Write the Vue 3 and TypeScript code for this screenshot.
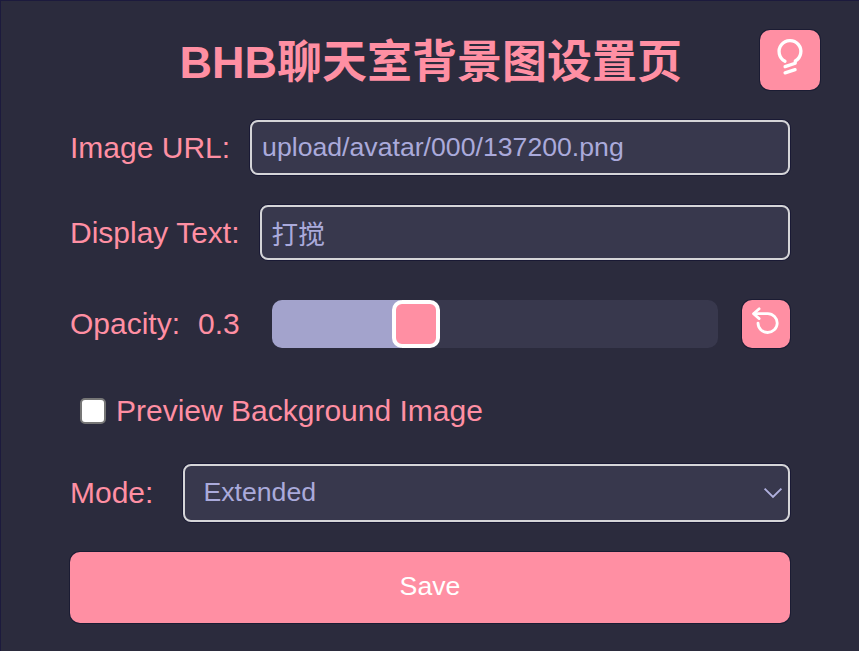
<script setup lang="ts">
import { computed, ref } from 'vue'

const imageUrl = ref<string>('upload/avatar/000/137200.png')
const displayText = ref<string>('打搅')
const opacity = ref<number>(0.3)
const preview = ref<boolean>(false)
const mode = ref<string>('Extended')

const THUMB = 48
const TRACK = 446
const thumbLeft = computed<number>(() => Math.round(opacity.value * (TRACK - THUMB)))

function resetOpacity(): void {
  opacity.value = 0.3
}
</script>

<template>
  <main class="page">
    <header class="head">
      <h1>BHB聊天室背景图设置页</h1>
      <button class="icon-btn theme" type="button">
        <svg width="60" height="60" viewBox="0 0 60 60" fill="none" stroke="#fff" stroke-width="3.3" stroke-linecap="round" stroke-linejoin="round">
          <path d="M25 31.2A10.9 10.9 0 1 1 35.3 31L35.2 33.2L25.1 36.6" />
          <path d="M25.1 42.8L35.1 39.7" />
        </svg>
      </button>
    </header>

    <div class="row field">
      <label for="url">Image URL:</label>
      <input id="url" v-model="imageUrl" type="text" spellcheck="false" />
    </div>

    <div class="row field">
      <label for="text">Display Text:</label>
      <input id="text" v-model="displayText" type="text" spellcheck="false" />
    </div>

    <div class="row opacity">
      <span class="name">Opacity:</span>
      <span class="value">{{ opacity }}</span>
      <div class="track">
        <div class="fill" :style="{ width: thumbLeft + 10 + 'px' }"></div>
        <div class="thumb"></div>
      </div>
      <button class="icon-btn reset" type="button" @click="resetOpacity">
        <svg width="48" height="48" viewBox="0 0 48 48" fill="none" stroke="#fff" stroke-width="2.8" stroke-linecap="round" stroke-linejoin="round">
          <path d="M17.2 8.8L11.5 13.7L17.2 18.6" />
          <path d="M12 13.7H25.8A9.6 9.4 0 1 1 16 23.1" />
        </svg>
      </button>
    </div>

    <label class="row check">
      <input v-model="preview" type="checkbox" />
      <span class="box"></span>
      <span>Preview Background Image</span>
    </label>

    <div class="row mode">
      <label for="mode">Mode:</label>
      <div class="select">
        <select id="mode" v-model="mode">
          <option>Extended</option>
        </select>
        <svg width="20" height="12" viewBox="0 0 20 12" fill="none" stroke="#b0b0de" stroke-width="1.9">
          <path d="M1.6 1.6L10 9.9L18.4 1.6" />
        </svg>
      </div>
    </div>

    <button class="save" type="button">Save</button>
  </main>
</template>

<style>
body {
  background: #2b2b3d;
}
</style>

<style scoped>
* {
  box-sizing: border-box;
}
.page {
  width: 859px;
  height: 651px;
  padding: 29px 69px 0;
  border: solid #1c1a3d;
  border-width: 1px 0 0 1px;
  background: #2b2b3d;
  color: #ff8fa3;
  font: 30px/34px "Liberation Sans", Arial, "Noto Sans CJK SC", sans-serif;
  overflow: hidden;
}
button {
  border: 0;
  padding: 0;
  background: #ff8fa3;
  color: #fff;
  box-shadow: 0 0 0 1px #1b1c33;
}
svg {
  display: block;
}
.head {
  display: flex;
  justify-content: flex-end;
  align-items: center;
  height: 60px;
  margin-right: -30px;
  margin-bottom: 30px;
}
h1 {
  margin: 0 78px 0 0;
  padding-top: 6px;
  font-size: 45px;
  line-height: 60px;
  font-weight: 700;
  white-space: nowrap;
}
.icon-btn {
  flex: none;
}
.theme {
  width: 60px;
  height: 60px;
  border-radius: 10px;
}
.reset {
  width: 48px;
  height: 48px;
  border-radius: 10px;
}
.row {
  display: flex;
  align-items: center;
  width: 720px;
}
.row > label,
.name,
.value,
.check span {
  white-space: nowrap;
}
.field {
  height: 55px;
  gap: 20px;
  margin-bottom: 30px;
}
.field input {
  flex: 1;
  min-width: 0;
  height: 55px;
  padding: 0 10px;
  border: 2px solid #d5d5d8;
  border-radius: 8px;
  background: #38384d;
  color: #aaaadb;
  font: 26.667px "Liberation Sans", Arial, "Noto Sans CJK SC", sans-serif;
  outline: none;
  box-shadow: 0 0 0 1px #191934;
}
.opacity {
  height: 48px;
  margin-top: 40px;
}
.value {
  margin-left: 18px;
}
.track {
  display: flex;
  width: 446px;
  height: 48px;
  margin-left: auto;
  margin-right: 24px;
  border-radius: 10px;
  background: #38384d;
}
.fill {
  flex: none;
  height: 48px;
  border-radius: 10px 0 0 10px;
  background: #a3a3cc;
}
.thumb {
  flex: none;
  width: 48px;
  height: 48px;
  margin-left: -9px;
  border: 4px solid #fff;
  border-radius: 10px;
  background: #ff8fa3;
}
.check {
  height: 34px;
  margin-top: 46px;
  padding-left: 10px;
}
.check input {
  appearance: none;
  width: 0;
  height: 0;
  margin: 0;
}
.box {
  width: 26px;
  height: 26px;
  margin: 0 10px 0 0;
  border: 2px solid #767676;
  border-radius: 5px;
  background: #fff;
}
.check input:checked + .box {
  background: #ff8fa3;
}
.mode {
  height: 58px;
  margin-top: 36px;
  gap: 30px;
}
.select {
  display: flex;
  align-items: center;
  flex: 1;
  height: 58px;
  padding: 0 5px 0 18px;
  border: 2px solid #d5d5d8;
  border-radius: 8px;
  background: #38384d;
  box-shadow: 0 0 0 1px #191934;
}
select {
  flex: 1;
  appearance: none;
  padding: 0 0 2px;
  border: 0;
  background: transparent;
  color: #aaaadb;
  font: 26.667px "Liberation Sans", Arial, sans-serif;
  outline: none;
}
.save {
  display: block;
  width: 720px;
  height: 71px;
  margin-top: 30px;
  padding-bottom: 2px;
  border-radius: 10px;
  font: 26.667px "Liberation Sans", Arial, sans-serif;
}
</style>
